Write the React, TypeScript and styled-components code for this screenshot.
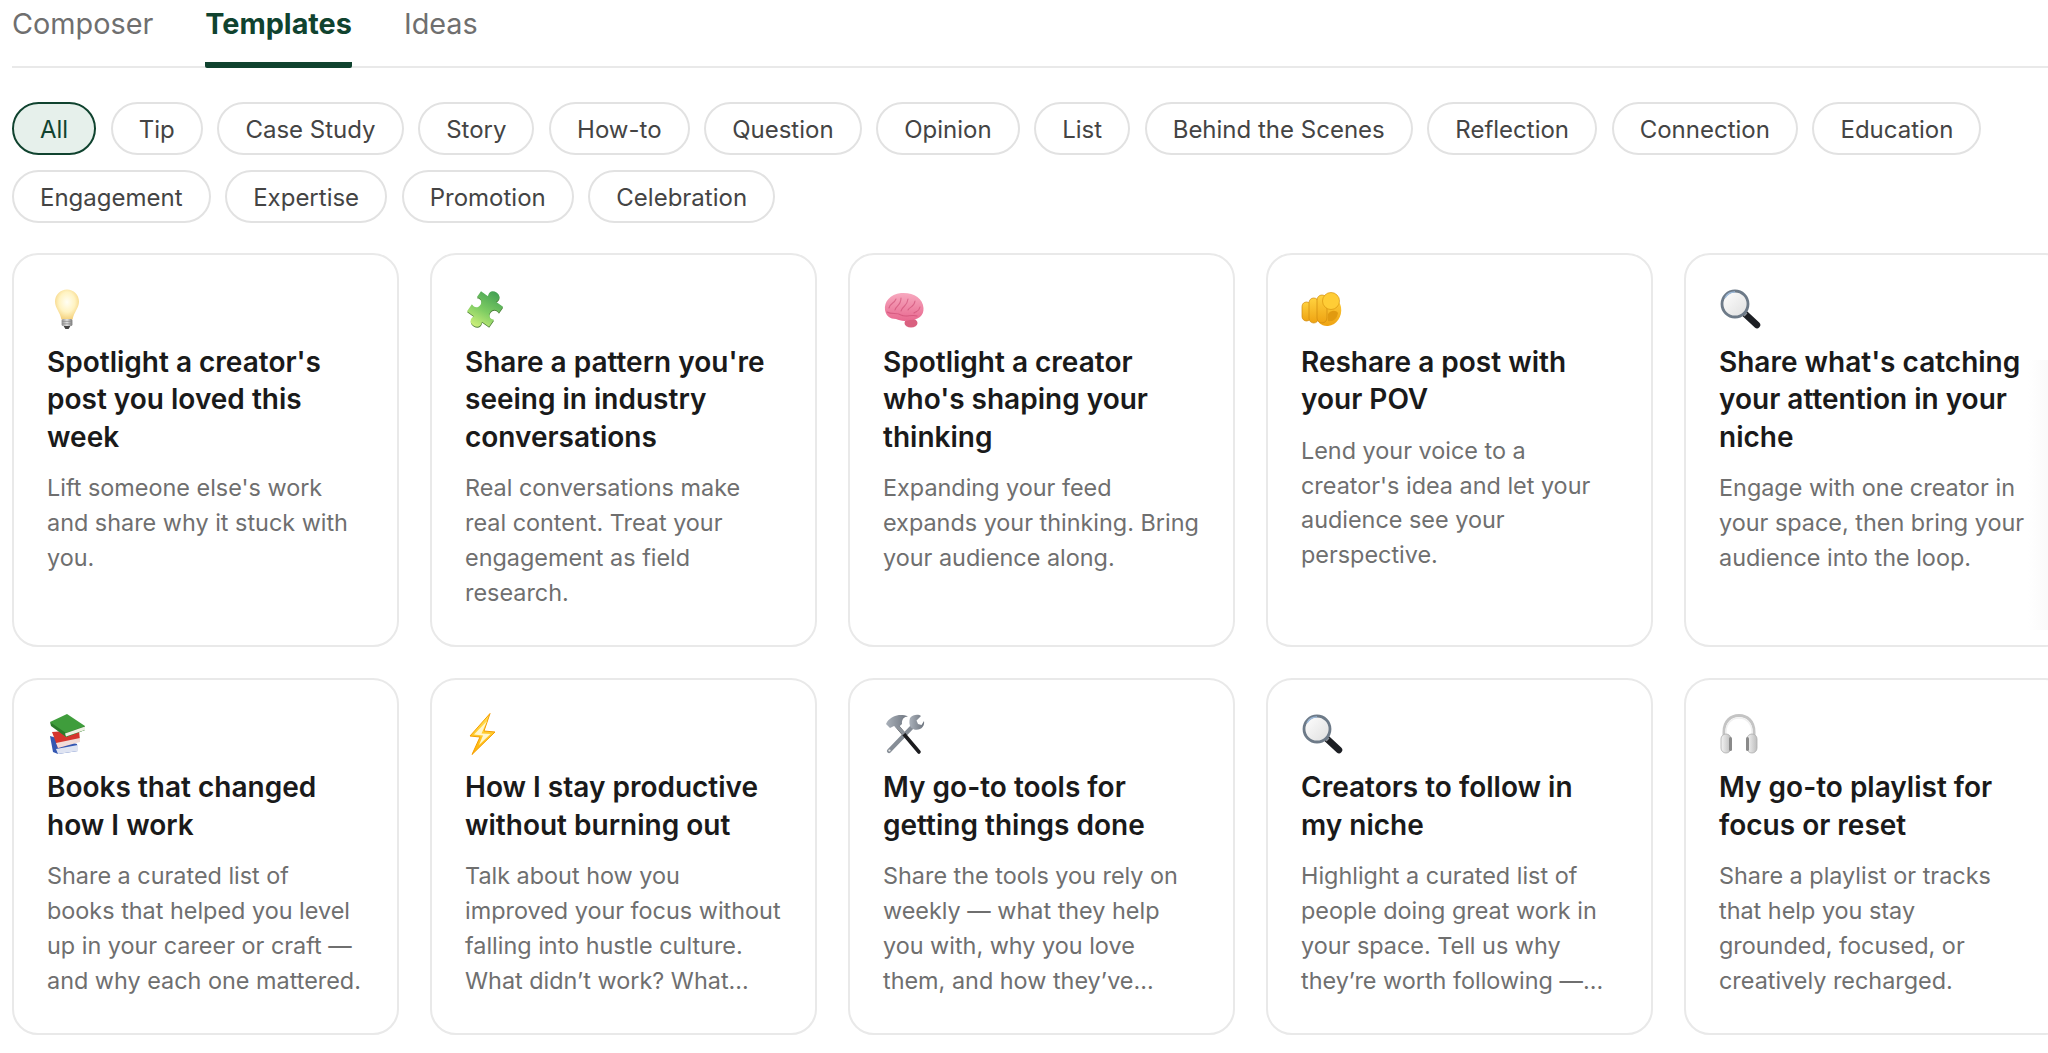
import React from 'react'
import styled, { createGlobalStyle } from 'styled-components'

const GlobalStyle = createGlobalStyle`
  html, body {
    margin: 0;
    background: #ffffff;
    overflow: hidden;
  }
  * {
    box-sizing: border-box;
  }
`

const EmojiSvg = styled.svg`
  display: block;
  width: 42px;
  height: 42px;
  flex: none;
`

const Bulb = () => (
  <EmojiSvg viewBox="0 0 42 42">
    <defs>
      <radialGradient id="bulbGlass" cx="50%" cy="42%" r="60%">
        <stop offset="0%" stopColor="#fffef4" />
        <stop offset="55%" stopColor="#fff3c2" />
        <stop offset="100%" stopColor="#f4cf78" />
      </radialGradient>
      <linearGradient id="bulbBase" x1="0" x2="1" y1="0" y2="0">
        <stop offset="0%" stopColor="#8d8d8d" />
        <stop offset="50%" stopColor="#e2e2e2" />
        <stop offset="100%" stopColor="#777" />
      </linearGradient>
    </defs>
    <path d="M20 1.5C26.5 1.5 32 6.8 32 13.6C32 20 27 24 25.6 31.5L14.4 31.5C13 24 8 20 8 13.6C8 6.8 13.5 1.5 20 1.5Z" fill="url(#bulbGlass)" />
    <rect x="14.6" y="31" width="10.8" height="7" rx="1.5" fill="url(#bulbBase)" />
    <path d="M15 33.4h10M15 35.8h10" stroke="#8a8a8a" strokeWidth="0.7" />
    <path d="M16.6 38h6.8L21.6 41h-3.2Z" fill="#444" />
  </EmojiSvg>
)

const puzzlePath = 'M2 7H9C7 3 9.5 .5 13 .5S19 3 17 7H24V13C21 11.5 18 13 18 16.5S21 21.5 24 20V27H17C19 31 16.5 33.5 13 33.5S7 31 9 27H2V20C5 21.5 8 20 8 16.5S5 11.5 2 13Z'

const Puzzle = () => (
  <EmojiSvg viewBox="0 0 42 42">
    <defs>
      <linearGradient id="puzzleFill" x1="0.7" x2="0.3" y1="0" y2="1" gradientTransform="rotate(-25 0.5 0.5)">
        <stop offset="0%" stopColor="#3f9d52" />
        <stop offset="55%" stopColor="#7fcd63" />
        <stop offset="100%" stopColor="#d3f27c" />
      </linearGradient>
    </defs>
    <g transform="translate(20 21) rotate(35) scale(1.22) translate(-13 -17)">
      <path d={puzzlePath} fill="#4d7f3a" transform="translate(0.6 0.6)" />
      <path d={puzzlePath} fill="url(#puzzleFill)" />
    </g>
  </EmojiSvg>
)

const Brain = () => (
  <EmojiSvg viewBox="0 0 42 42">
    <defs>
      <linearGradient id="brainFill" x1="0" x2="0" y1="0" y2="1">
        <stop offset="0%" stopColor="#f7a9bf" />
        <stop offset="100%" stopColor="#e8688f" />
      </linearGradient>
    </defs>
    <ellipse cx="28" cy="35" rx="6.500" ry="4.500" fill="#d9607f" />
    <path d="M2 22C1 14 7 6 18 5C30 4 40 10 40.500 20C41 28 35 32 27 32C21 34 17 32.500 13 31C7 31 3 28 2 22Z" fill="url(#brainFill)" />
    <path d="M6 20C8 14 11 16 13 11M12 22C13 17 18 18 18 10M18 23C20 17 24 19 25 11M25 22C27 18 31 20 32 13M31 25C33 23 36 24 37 19M4 24C9 27 14 24 18 27C23 30 28 26 34 28" fill="none" stroke="#c9476f" strokeWidth="1.100" strokeLinecap="round" opacity="0.6" />
  </EmojiSvg>
)

const PointingHand = () => (
  <EmojiSvg viewBox="0 0 42 42">
    <defs>
      <linearGradient id="handFill" x1="0" x2="0" y1="0" y2="1">
        <stop offset="0%" stopColor="#ffd23f" />
        <stop offset="100%" stopColor="#efa312" />
      </linearGradient>
    </defs>
    <path d="M16 11C24 5 38 8 40 19C41.500 28 36 37 27 38C20 38.500 16 34 16 28Z" fill="url(#handFill)" />
    <rect x="1" y="14" width="9" height="19" rx="4.500" fill="url(#handFill)" stroke="#cf8a10" strokeWidth="0.700" />
    <rect x="8" y="10" width="9.500" height="25" rx="4.700" fill="url(#handFill)" stroke="#cf8a10" strokeWidth="0.700" />
    <rect x="16" y="7" width="10" height="28" rx="5" fill="url(#handFill)" stroke="#cf8a10" strokeWidth="0.700" />
    <circle cx="30" cy="13" r="8.500" fill="#ffcd36" stroke="#d9950f" strokeWidth="0.700" />
    <path d="M27 26C30 22 35 22 37 25C36 31 32 34 27 33Z" fill="#e19a10" />
  </EmojiSvg>
)

const Magnifier = ({ id }: { id: string }) => (
  <EmojiSvg viewBox="0 0 42 42">
    <defs>
      <linearGradient id={`lens-${id}`} x1="0" x2="1" y1="0" y2="1">
        <stop offset="0%" stopColor="#ffffff" />
        <stop offset="100%" stopColor="#dedede" />
      </linearGradient>
    </defs>
    <path d="M24 24L38 37" stroke="#1d1f24" strokeWidth="6.500" strokeLinecap="round" />
    <path d="M22.500 22.500L27 27" stroke="#8d9197" strokeWidth="4" />
    <circle cx="16" cy="16" r="13" fill={`url(#lens-${id})`} stroke="#6d7a88" strokeWidth="2.800" />
    <path d="M6 10C8 6 12 4 16 4" fill="none" stroke="#9db9d8" strokeWidth="1.400" />
  </EmojiSvg>
)

const Books = () => (
  <EmojiSvg viewBox="0 0 42 42">
    <path d="M3 23L30 31L31 38L11 41L6 39Z" fill="#3457b2" />
    <path d="M9 36L31 32V38L11 41Z" fill="#dfe4f2" />
    <path d="M5 19L32 17L33 28L11 35Z" fill="#d5362e" />
    <path d="M9 30L33 25V29L11 35Z" fill="#f2dcd8" />
    <path d="M3 9L20 1L38 13V17L19 24Z" fill="#3f9d3c" />
    <path d="M3 9L19 20L38 13V17L19 24L4 13Z" fill="#2a7a2a" />
    <path d="M18 20.500L38 13.500V17L19 23.500Z" fill="#eef0e2" />
  </EmojiSvg>
)

const Lightning = () => (
  <EmojiSvg viewBox="0 0 42 42">
    <defs>
      <linearGradient id="boltFill" x1="0" x2="0" y1="0" y2="1">
        <stop offset="0%" stopColor="#ffe25a" />
        <stop offset="100%" stopColor="#ffb300" />
      </linearGradient>
    </defs>
    <path d="M25 0.500L19 18L30 19L7 41.500L15 24L5 23Z" fill="url(#boltFill)" stroke="#f59d00" strokeWidth="1" strokeLinejoin="round" />
    <path d="M22 8L16.500 20.500L25.500 21L14 32L18 22.500L9 21.500Z" fill="#fff6cf" />
  </EmojiSvg>
)

const Tools = () => (
  <EmojiSvg viewBox="0 0 42 42">
    <defs>
      <linearGradient id="toolSteel" x1="0" x2="1" y1="0" y2="0">
        <stop offset="0%" stopColor="#aab1ba" />
        <stop offset="100%" stopColor="#6d747e" />
      </linearGradient>
    </defs>
    <path d="M30 13L6 38" stroke="#868d96" strokeWidth="4.200" strokeLinecap="round" />
    <circle cx="6.500" cy="37.500" r="1.100" fill="#e8e8e8" />
    <path d="M27 5C30 1 36 1 38 3L33.500 7.500L35 11L38.500 12L41 8C42 13 38 18 31 16.500L28 14.500C26 12 26 8 27 5Z" fill="url(#toolSteel)" />
    <path d="M14 13L36 39" stroke="#1c1c1f" strokeWidth="3.600" strokeLinecap="round" />
    <path d="M14 13L21 21" stroke="#8d939b" strokeWidth="3.600" />
    <path d="M4 9C9 2 18 0.500 25 3.500C21 3.500 18.500 6.500 19 11L14 15.500L11 13L7 15L3 11Z" fill="url(#toolSteel)" />
  </EmojiSvg>
)

const Headphones = () => (
  <EmojiSvg viewBox="0 0 42 42">
    <defs>
      <linearGradient id="cupFill" x1="0" x2="1" y1="0" y2="0">
        <stop offset="0%" stopColor="#f4f4f4" />
        <stop offset="100%" stopColor="#bdbdbd" />
      </linearGradient>
    </defs>
    <path d="M5 27V19C5 8 12 2.500 20 2.500S35 8 35 19V27" fill="none" stroke="#c4c4c4" strokeWidth="3" />
    <path d="M7 26V19C7 10 13 5 20 5S33 10 33 19V26" fill="none" stroke="#f0f0f0" strokeWidth="1.500" />
    <rect x="2" y="21" width="10" height="19" rx="5" fill="url(#cupFill)" stroke="#adadad" strokeWidth="0.800" />
    <rect x="28" y="21" width="10" height="19" rx="5" fill="url(#cupFill)" stroke="#adadad" strokeWidth="0.800" />
    <rect x="10" y="24" width="3" height="14" rx="1.500" fill="#8a8a8a" />
    <rect x="27" y="24" width="3" height="14" rx="1.500" fill="#8a8a8a" />
  </EmojiSvg>
)

const tabs = ['Composer', 'Templates', 'Ideas']
const filters = [
  'All', 'Tip', 'Case Study', 'Story', 'How-to', 'Question', 'Opinion', 'List',
  'Behind the Scenes', 'Reflection', 'Connection', 'Education', 'Engagement',
  'Expertise', 'Promotion', 'Celebration',
]

const topRow = [
  {
    emoji: <Bulb />,
    title: "Spotlight a creator's post you loved this week",
    text: "Lift someone else's work and share why it stuck with you.",
  },
  {
    emoji: <Puzzle />,
    title: "Share a pattern you're seeing in industry conversations",
    text: 'Real conversations make real content. Treat your engagement as field research.',
  },
  {
    emoji: <Brain />,
    title: "Spotlight a creator who's shaping your thinking",
    text: 'Expanding your feed expands your thinking. Bring your audience along.',
  },
  {
    emoji: <PointingHand />,
    title: 'Reshare a post with your POV',
    text: "Lend your voice to a creator's idea and let your audience see your perspective.",
  },
  {
    emoji: <Magnifier id="top" />,
    title: "Share what's catching your attention in your niche",
    text: 'Engage with one creator in your space, then bring your audience into the loop.',
  },
]

const bottomRow = [
  {
    emoji: <Books />,
    title: 'Books that changed how I work',
    text: 'Share a curated list of\nbooks that helped you level up in your career or craft — and why each one mattered.',
  },
  {
    emoji: <Lightning />,
    title: 'How I stay productive without burning out',
    text: 'Talk about how you improved your focus without falling into hustle culture. What didn’t work? What…',
  },
  {
    emoji: <Tools />,
    title: 'My go-to tools for getting things done',
    text: 'Share the tools you rely on weekly — what they help you with, why you love them, and how they’ve…',
  },
  {
    emoji: <Magnifier id="bottom" />,
    title: 'Creators to follow in my niche',
    text: 'Highlight a curated list of people doing great work in your space. Tell us why they’re worth following —…',
  },
  {
    emoji: <Headphones />,
    title: 'My go-to playlist for focus or reset',
    text: 'Share a playlist or tracks that help you stay\ngrounded, focused, or creatively recharged.',
  },
]

export default function App() {
  return (
    <Page>
      <GlobalStyle />
      <TabBar>
        {tabs.map((tab) => (
          <Tab key={tab} $active={tab === 'Templates'}>{tab}</Tab>
        ))}
      </TabBar>
      <FilterList>
        {filters.map((filter) => (
          <Chip key={filter} $active={filter === 'All'}>{filter}</Chip>
        ))}
      </FilterList>
      <Rows>
        {[topRow, bottomRow].map((row, i) => (
          <CardRow key={i}>
            {row.map((card) => (
              <Card key={card.title}>
                {card.emoji}
                <CardTitle>{card.title}</CardTitle>
                <CardText>{card.text}</CardText>
              </Card>
            ))}
          </CardRow>
        ))}
      </Rows>
      <EdgeFade />
    </Page>
  )
}

const Page = styled.div`
  position: relative;
  width: 2048px;
  height: 1053px;
  padding-left: 12px;
  overflow: hidden;
  font-family: Inter, "Liberation Sans", sans-serif;
  background: #ffffff;
`

const TabBar = styled.div`
  display: flex;
  gap: 52px;
  height: 68px;
  border-bottom: 2px solid #e9e9e9;
`

const Tab = styled.div<{ $active?: boolean }>`
  height: 68px;
  padding-top: 5px;
  font-size: 28.8px;
  line-height: 38px;
  font-weight: ${(p) => (p.$active ? 700 : 400)};
  color: ${(p) => (p.$active ? '#10432f' : '#6f6f6f')};
  border-bottom: 6px solid ${(p) => (p.$active ? '#10432f' : 'transparent')};
  border-radius: 0 0 2px 2px;
`

const FilterList = styled.div`
  display: flex;
  flex-wrap: wrap;
  gap: 15px 14.6px;
  width: 2020px;
  margin-top: 34px;
`

const Chip = styled.div<{ $active?: boolean }>`
  height: 53px;
  padding: 1px 26px 0;
  display: flex;
  align-items: center;
  font-size: 24px;
  font-weight: 400;
  color: ${(p) => (p.$active ? '#10432f' : '#444444')};
  background: ${(p) => (p.$active ? '#e6f0eb' : '#ffffff')};
  border: 2px solid ${(p) => (p.$active ? '#10432f' : '#e2e2e2')};
  border-radius: 27px;
`

const Rows = styled.div`
  display: flex;
  flex-direction: column;
  gap: 31px;
  margin-top: 30px;
`

const CardRow = styled.div`
  display: flex;
  gap: 31px;
  align-items: stretch;
`

const Card = styled.div`
  flex: 0 0 387px;
  padding: 33px 33px 35px;
  border: 2px solid #e9e9e9;
  border-radius: 26px;
  background: #ffffff;
`

const CardTitle = styled.h3`
  margin: 14px 0 0;
  font-size: 28px;
  line-height: 37.4px;
  font-weight: 600;
  color: #1a1a1a;
`

const CardText = styled.p`
  margin: 15px 0 0;
  font-size: 23.4px;
  line-height: 34.8px;
  font-weight: 400;
  color: #6f6f6f;
  white-space: pre-line;
`

const EdgeFade = styled.div`
  position: absolute;
  top: 360px;
  right: 0;
  width: 20px;
  height: 270px;
  background: linear-gradient(to right, rgba(240, 240, 240, 0), rgba(240, 240, 240, 0.35));
`
